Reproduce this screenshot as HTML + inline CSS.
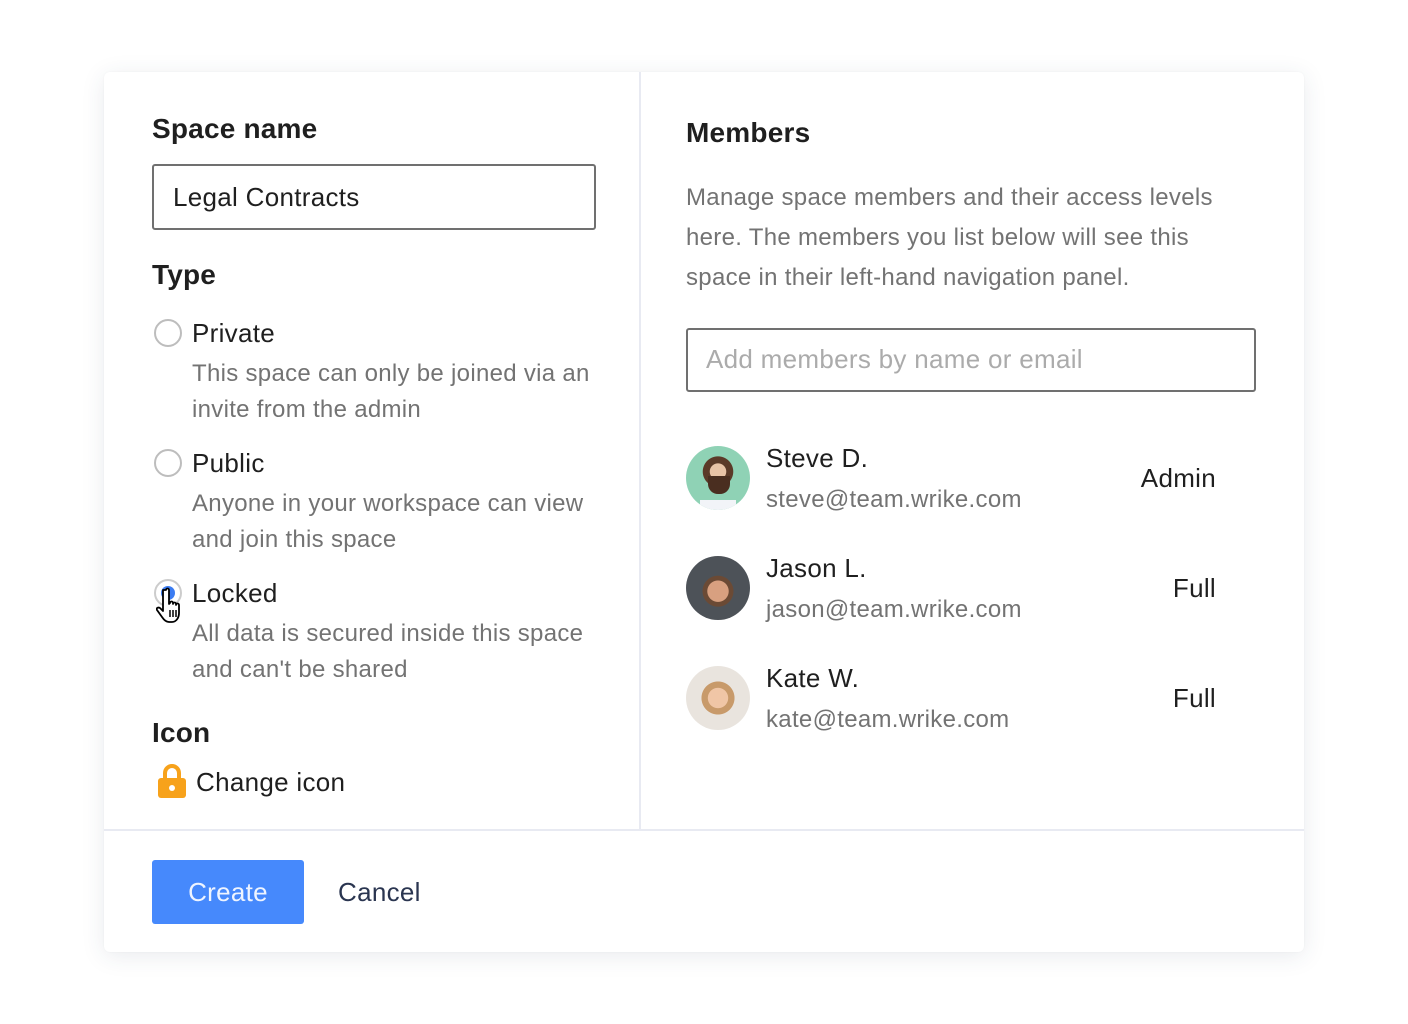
<!DOCTYPE html>
<html><head><meta charset="utf-8"><style>
*{margin:0;padding:0;box-sizing:border-box}
body{width:1408px;height:1024px;background:#fff;font-family:"Liberation Sans",sans-serif;position:relative;overflow:hidden;color:#1f1f1f}
.card{position:absolute;left:104px;top:72px;width:1200px;height:880px;background:#fff;border-radius:6px;box-shadow:0 4px 24px rgba(40,60,90,.10),0 0 2px rgba(0,0,0,.04)}
.a{position:absolute;white-space:nowrap}
.h{font-size:28px;font-weight:bold;line-height:36px;color:#1f1f1f;letter-spacing:0.2px}
.t{font-size:26px;line-height:36px;color:#1f1f1f;letter-spacing:0.3px}
.d{font-size:24px;line-height:36px;color:#737373;letter-spacing:0.3px}
.radio{position:absolute;width:28px;height:28px;border:2px solid #bdbdbd;border-radius:50%;background:#fff}
.av{position:absolute;left:686px;width:64px;height:64px;border-radius:50%;overflow:hidden}
.role{position:absolute;right:192px;font-size:26px;line-height:36px;color:#1f1f1f;letter-spacing:0.3px}
</style></head><body>
<div class="card"></div>
<div class="a" style="left:639px;top:72px;width:2px;height:758px;background:#e8eaf2"></div>
<div class="a" style="left:104px;top:829px;width:1200px;height:2px;background:#e8eaf2"></div>

<div class="a h" style="left:152px;top:111px">Space name</div>
<div class="a" style="left:152px;top:164px;width:444px;height:66px;border:2px solid #707070;border-radius:3px"></div>
<div class="a t" style="left:173px;top:179px">Legal Contracts</div>
<div class="a h" style="left:152px;top:257px">Type</div>

<div class="radio" style="left:154px;top:319px"></div>
<div class="a t" style="left:192px;top:315px">Private</div>
<div class="a d" style="left:192px;top:356px">This space can only be joined via an<br>invite from the admin</div>

<div class="radio" style="left:154px;top:449px"></div>
<div class="a t" style="left:192px;top:445px">Public</div>
<div class="a d" style="left:192px;top:486px">Anyone in your workspace can view<br>and join this space</div>

<div class="radio" style="left:154px;top:579px;border-color:#ccc"><div style="position:absolute;left:5px;top:5px;width:14px;height:14px;border-radius:50%;background:#3b7cf2"></div></div>
<div class="a t" style="left:192px;top:575px">Locked</div>
<svg class="a" style="left:156px;top:584px" width="40" height="48" viewBox="0 0 40 44"><path d="M10 4c0-2 3-2 3 0v14l1-1c0-2 3-2 3 0v1c0-2 3-2 3 0v1c0-2 3-2 3 0v8c0 5-3 9-7 9h-3c-3 0-5-2-7-5l-5-7c-1-2 1-3 3-2l3 3V4z" fill="#fff" stroke="#000" stroke-width="1.8" stroke-linejoin="round"/><path d="M14 24v7M17 24v7M20 24v7" stroke="#000" stroke-width="1.5"/></svg>
<div class="a d" style="left:192px;top:616px">All data is secured inside this space<br>and can't be shared</div>

<div class="a h" style="left:152px;top:715px">Icon</div>
<svg class="a" style="left:156px;top:763px" width="32" height="36" viewBox="0 0 32 36"><path d="M9 15V10a7 7 0 0 1 14 0v5" fill="none" stroke="#f7a21b" stroke-width="4"/><rect x="2" y="15" width="28" height="20" rx="3" fill="#f7a21b"/><circle cx="16" cy="25" r="3" fill="#fff"/></svg>
<div class="a t" style="left:196px;top:764px">Change icon</div>

<div class="a" style="left:152px;top:860px;width:152px;height:64px;background:#4689fc;border-radius:3px;color:#eef4ff;font-size:26px;line-height:64px;text-align:center;letter-spacing:0.3px">Create</div>
<div class="a t" style="left:338px;top:874px;color:#2a3550">Cancel</div>

<div class="a h" style="left:686px;top:115px">Members</div>
<div class="a d" style="left:686px;top:178px;line-height:40px">Manage space members and their access levels<br>here. The members you list below will see this<br>space in their left-hand navigation panel.</div>
<div class="a" style="left:686px;top:328px;width:570px;height:64px;border:2px solid #707070;border-radius:3px"></div>
<div class="a t" style="left:706px;top:341px;color:#ababab">Add members by name or email</div>

<div class="av" style="top:446px;background:radial-gradient(circle at 50% 40%,#e8c3a6 0 16%,#5b3a28 17% 30%,#8fd2b5 31%)"><div style="position:absolute;left:22px;top:30px;width:22px;height:18px;background:#4a2e20;border-radius:0 0 10px 10px"></div><div style="position:absolute;left:14px;top:54px;width:36px;height:12px;background:#f2f4f8"></div></div>
<div class="a t" style="left:766px;top:440px">Steve D.</div>
<div class="a d" style="left:766px;top:482px">steve@team.wrike.com</div>
<div class="role" style="top:460px">Admin</div>

<div class="av" style="top:556px;background:radial-gradient(circle at 50% 55%,#d8a080 0 22%,#6b4a35 23% 32%,#4d5258 33%)"></div>
<div class="a t" style="left:766px;top:550px">Jason L.</div>
<div class="a d" style="left:766px;top:592px">jason@team.wrike.com</div>
<div class="role" style="top:570px">Full</div>

<div class="av" style="top:666px;background:radial-gradient(circle at 50% 50%,#f0c6a6 0 22%,#c89a6a 23% 36%,#e9e4de 37%)"></div>
<div class="a t" style="left:766px;top:660px">Kate W.</div>
<div class="a d" style="left:766px;top:702px">kate@team.wrike.com</div>
<div class="role" style="top:680px">Full</div>
</body></html>
